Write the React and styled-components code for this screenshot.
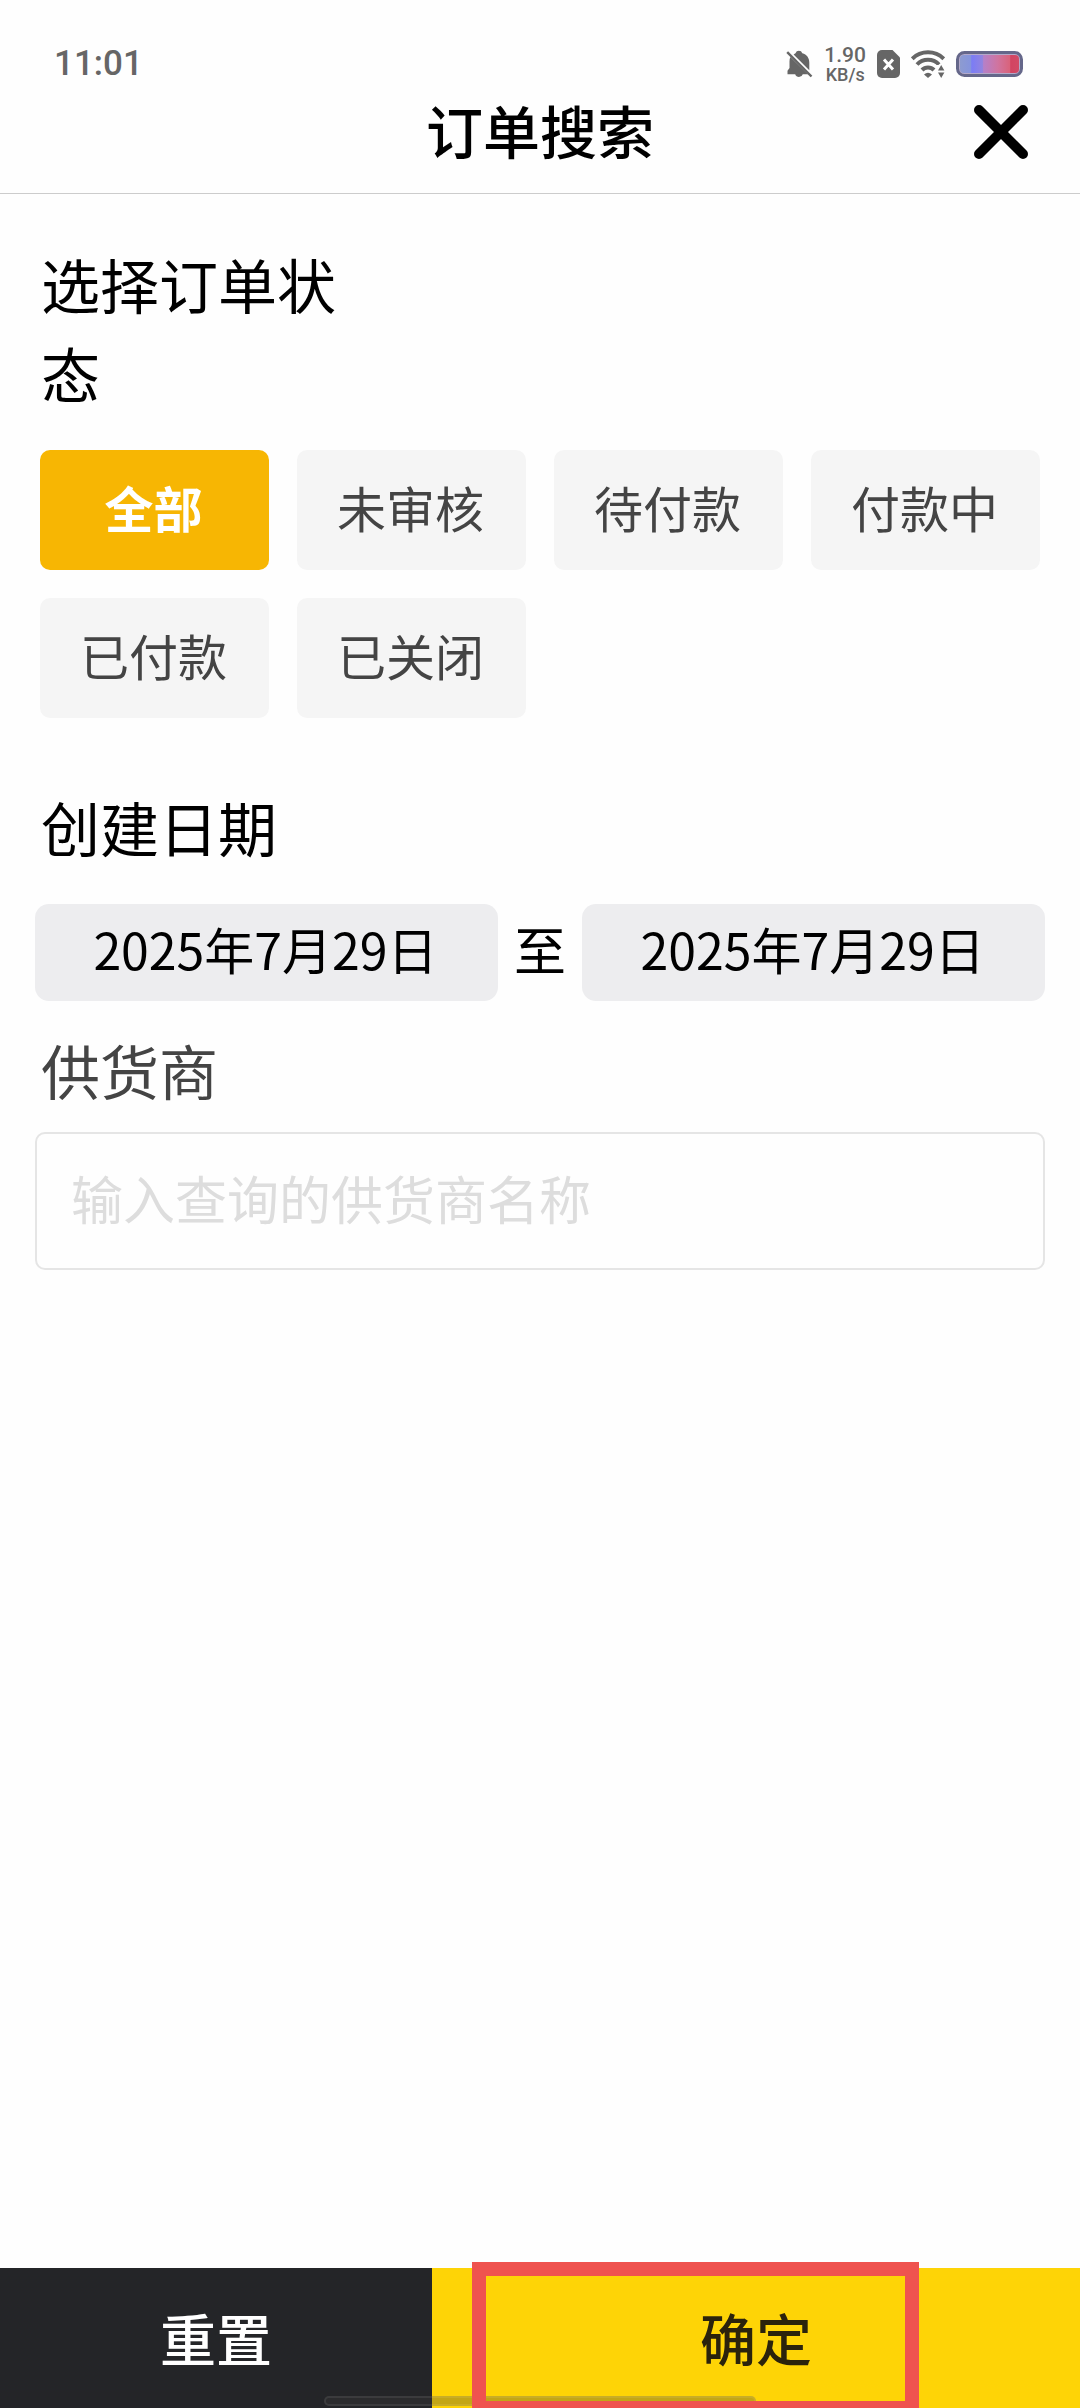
import React, { useState } from 'react';
import styled, { createGlobalStyle } from 'styled-components';

const GlobalStyle = createGlobalStyle`
  * {
    box-sizing: border-box;
  }

  body {
    margin: 0;
    background: #fefefe;
  }

  body, button, input {
    font-family: 'Noto Sans CJK SC', sans-serif;
  }
`;

const Screen = styled.div`
  display: flex;
  flex-direction: column;
  min-height: 100vh;
`;

const StatusBar = styled.div`
  display: flex;
  align-items: center;
  justify-content: space-between;
  height: 80px;
  padding: 48px 57px 0 54px;
  color: #666;
`;

const Clock = styled.span`
  font: 500 35px/36px Roboto, sans-serif;
`;

const StatusIcons = styled.div`
  display: flex;
  align-items: center;
  gap: 11px;

  svg {
    display: block;
  }
`;

const Speed = styled.div`
  display: flex;
  flex-direction: column;
  align-items: center;
  font: 500 21px/22px Roboto, sans-serif;
`;

const SpeedUnit = styled.span`
  font-size: 18px;
  line-height: 18px;
`;

const Header = styled.header`
  display: grid;
  grid-template-columns: 1fr auto 1fr;
  align-items: center;
  height: 114px;
  padding: 0 52px 9px;
  border-bottom: 1px solid #ccc;
`;

const Title = styled.h1`
  grid-column: 2;
  margin: 0;
  padding-bottom: 6px;
  font-size: 57px;
  font-weight: 500;
  line-height: 88px;
  color: #000;
`;

const CloseButton = styled.button`
  justify-self: end;
  padding: 0;
  border: 0;
  background: none;
  cursor: pointer;

  svg {
    display: block;
  }
`;

const Main = styled.main`
  flex: 1;
  padding: 45px 35px;
`;

const Label = styled.label`
  display: block;
  width: 30%;
  margin: 0 6px;
  font-size: 59px;
  line-height: 89px;
  color: ${(props) => (props.$muted ? '#444' : '#000')};
`;

const StatusGrid = styled.div`
  display: grid;
  grid-template-columns: repeat(4, 1fr);
  gap: 28px;
  margin: 33px 5px 64px;
`;

const StatusButton = styled.button`
  height: 120px;
  padding: 0 2px 8px 0;
  border: 0;
  border-radius: 10px;
  font-size: 49px;
  font-weight: ${(props) => (props.$active ? 700 : 400)};
  color: ${(props) => (props.$active ? '#fff' : '#444')};
  background: ${(props) => (props.$active ? '#f7b603' : '#f5f5f5')};
  cursor: pointer;
`;

const DateRow = styled.div`
  display: flex;
  align-items: center;
  gap: 16px;
  margin: 33px 0 24px;
`;

const DateInput = styled.input`
  flex: 1;
  min-width: 0;
  height: 97px;
  padding: 0 2px 10px 0;
  border: 0;
  border-radius: 14px;
  font-size: 50px;
  text-align: center;
  color: #000;
  background: #ededef;
`;

const DateDivider = styled.span`
  padding-bottom: 8px;
  font-size: 52px;
  line-height: 88px;
  color: #000;
`;

const TextInput = styled.input`
  display: block;
  width: 100%;
  height: 138px;
  margin-top: 18px;
  padding: 0 34px 8px;
  border: 2px solid #e5e5e5;
  border-radius: 10px;
  font-size: 52px;
  color: #444;
  background: #fefefe;

  &::placeholder {
    color: #ddd;
    opacity: 1;
  }
`;

const Footer = styled.footer`
  position: relative;
  display: grid;
  grid-template-columns: 2fr 3fr;
  height: 140px;
`;

const FooterButton = styled.button`
  padding: 0 0 4px;
  border: 0;
  font-size: 56px;
  font-weight: 500;
  color: ${(props) => (props.$primary ? '#2b230c' : '#fff')};
  background: ${(props) => (props.$primary ? '#fed406' : '#242528')};
  cursor: pointer;
`;

const HomeHandle = styled.div`
  position: absolute;
  right: 30%;
  bottom: 2px;
  left: 30%;
  height: 10px;
  border: 2px solid rgba(255, 255, 255, 0.08);
  border-radius: 5px;
  background: rgba(60, 60, 60, 0.3);
  pointer-events: none;
`;

const Highlight = styled.div`
  position: absolute;
  top: -6px;
  right: 161px;
  bottom: 0;
  left: 472px;
  border: 14px solid #ef534f;
  border-bottom-width: 7px;
  pointer-events: none;
`;

const MutedBell = () => (
  <svg width="27" height="30" viewBox="0 0 27 30" fill="#666">
    <path d="M9.5 4.2a3.6 3.6 0 0 1 6.8 0c4.500 1.300 7 4.600 7 9.300v7.800L7.600 5.400z" />
    <path d="M4.400 8 22 25.200h-5.200a4 4 0 0 1-7.600 0H1.500v-3.500l2-2.700v-6.500c0-1.700.3-3.200.9-4.500z" />
    <path d="M1.200 3.200 25.500 27.500" stroke="#666" strokeWidth="2.400" />
  </svg>
);

const NoSim = () => (
  <svg width="23" height="28" viewBox="0 0 23 28">
    <path d="M5 0h10.500L23 7.500V23a5 5 0 0 1-5 5H5a5 5 0 0 1-5-5V5a5 5 0 0 1 5-5z" fill="#666" />
    <path d="m7 9.500 9 10m0-10-9 10" stroke="#fff" strokeWidth="3" />
  </svg>
);

const Wifi = () => (
  <svg width="34" height="28" viewBox="0 0 34 28" fill="none" stroke="#666" strokeWidth="4">
    <path d="M1.200 8.800a22.500 22.500 0 0 1 31.600 0" />
    <path d="M6 14.500a15 15 0 0 1 22 0" />
    <path d="M11 20a8.300 8.300 0 0 1 12 0" />
    <path d="M13 24.500q4-3.500 8 0l-4 3.500z" fill="#666" stroke="none" />
    <path d="M25.500 15h9v14h-9z" fill="#fefefe" stroke="none" />
    <path d="m27 20.500 3.200-5.500 3.200 5.500zM27 22.500l3.200 5.500 3.200-5.500z" fill="#666" stroke="none" />
  </svg>
);

const Battery = () => (
  <svg width="67" height="26" viewBox="0 0 67 26">
    <defs>
      <linearGradient id="charge">
        <stop offset="0" stopColor="#8d9bd0" />
        <stop offset="0.18" stopColor="#8594dc" />
        <stop offset="0.2" stopColor="#7b7cf5" />
        <stop offset="0.38" stopColor="#9184e0" />
        <stop offset="0.4" stopColor="#b680c8" />
        <stop offset="0.64" stopColor="#d0749f" />
        <stop offset="0.84" stopColor="#d9637c" />
        <stop offset="0.86" stopColor="#d24462" />
        <stop offset="1" stopColor="#d24a66" />
      </linearGradient>
    </defs>
    <rect x="1.500" y="1.500" width="64" height="23" rx="7" fill="#b3a9c9" stroke="#65678a" strokeWidth="3" />
    <rect x="4" y="4" width="59" height="18" rx="4" fill="url(#charge)" />
  </svg>
);

const Cross = () => (
  <svg width="54" height="54" viewBox="0 0 54 54" stroke="#000" strokeWidth="10" strokeLinecap="round">
    <path d="m5 5 44 44M49 5 5 49" />
  </svg>
);

const statuses = ['全部', '未审核', '待付款', '付款中', '已付款', '已关闭'];
const today = '2025年7月29日';

export default function App() {
  const [status, setStatus] = useState('全部');
  const [from, setFrom] = useState(today);
  const [to, setTo] = useState(today);
  const [supplier, setSupplier] = useState('');

  const reset = () => {
    setStatus('全部');
    setFrom(today);
    setTo(today);
    setSupplier('');
  };

  return (
    <Screen>
      <GlobalStyle />
      <StatusBar>
        <Clock>11:01</Clock>
        <StatusIcons>
          <MutedBell />
          <Speed>
            <span>1.90</span>
            <SpeedUnit>KB/s</SpeedUnit>
          </Speed>
          <NoSim />
          <Wifi />
          <Battery />
        </StatusIcons>
      </StatusBar>
      <Header>
        <Title>订单搜索</Title>
        <CloseButton aria-label="关闭">
          <Cross />
        </CloseButton>
      </Header>
      <Main>
        <Label as="div" id="status-label">选择订单状态</Label>
        <StatusGrid role="group" aria-labelledby="status-label">
          {statuses.map((name) => (
            <StatusButton
              key={name}
              $active={name === status}
              aria-pressed={name === status}
              onClick={() => setStatus(name)}
            >
              {name}
            </StatusButton>
          ))}
        </StatusGrid>
        <Label htmlFor="date-from">创建日期</Label>
        <DateRow>
          <DateInput id="date-from" value={from} onChange={(e) => setFrom(e.target.value)} />
          <DateDivider as="label" htmlFor="date-to">至</DateDivider>
          <DateInput id="date-to" value={to} onChange={(e) => setTo(e.target.value)} />
        </DateRow>
        <Label $muted htmlFor="supplier">供货商</Label>
        <TextInput
          id="supplier"
          placeholder="输入查询的供货商名称"
          value={supplier}
          onChange={(e) => setSupplier(e.target.value)}
        />
      </Main>
      <Footer>
        <FooterButton onClick={reset}>重置</FooterButton>
        <FooterButton $primary>确定</FooterButton>
        <HomeHandle />
        <Highlight />
      </Footer>
    </Screen>
  );
}
